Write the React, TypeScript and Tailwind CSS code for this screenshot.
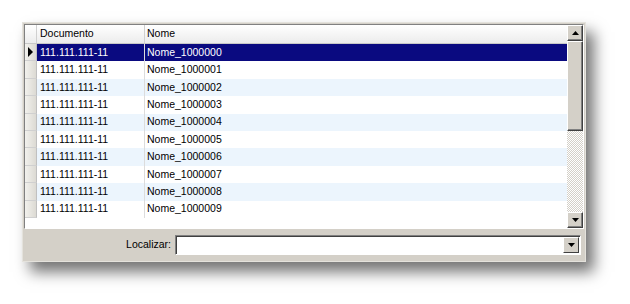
const ROWS = Array.from({ length: 10 }, (_, i) => ({
  doc: "111.111.111-11",
  nome: `Nome_100000${i}`,
}));

function Arrow({ dir }: { dir: "up" | "down" | "right" }) {
  const pts =
    dir === "up" ? "0,4 7,4 3.5,0" : dir === "down" ? "0,0 7,0 3.5,4" : "0,0 5,5 0,10";
  const w = dir === "right" ? 5 : 7;
  const h = dir === "right" ? 10 : 4;
  return (
    <svg width={w} height={h} viewBox={`0 0 ${w} ${h}`}>
      <polygon points={pts} fill="#000" />
    </svg>
  );
}

function Btn({ dir }: { dir: "up" | "down" }) {
  return (
    <div className="flex h-[16px] w-[16px] shrink-0 items-center justify-center border-t border-l border-t-white border-l-white border-r border-b border-r-[#404040] border-b-[#404040] bg-[#d4d0c8] shadow-[inset_-1px_-1px_0_#808080]">
      <Arrow dir={dir} />
    </div>
  );
}

export default function App() {
  return (
    <div className="h-[304px] w-[630px] bg-white pt-[22px] pl-[22px] font-['Liberation_Sans',Arial,sans-serif] text-[10.5px] text-black">
      <div className="flex h-[240px] w-[564px] flex-col border border-[#e4e2dc] bg-[#d4d0c8] p-[1px] shadow-[8px_10px_14px_rgba(0,0,0,0.55)]">
        {/* grid */}
        <div className="flex h-[205px] border-t border-l border-t-[#808080] border-l-[#808080] border-r border-b border-r-white border-b-white">
          <div className="flex flex-1 flex-col bg-white">
            <div className="flex h-[19px] shrink-0 border-b border-[#c8c8c8] bg-gradient-to-b from-white to-[#ececec]">
              <div className="w-[12px] border-r border-[#d0d0d0]" />
              <div className="flex w-[108px] items-center border-r border-[#d0d0d0] pl-[3px]">Documento</div>
              <div className="flex flex-1 items-center pl-[2px]">Nome</div>
            </div>
            {ROWS.map((r, i) => {
              const sel = i === 0;
              return (
                <div key={i} className="flex h-[17.4px] shrink-0">
                  <div className="flex w-[12px] items-center justify-center border-r border-b border-r-[#c0c0c0] border-b-[#d0d0d0] bg-gradient-to-r from-[#f2f1ed] to-[#dcdad3]">
                    {sel && <Arrow dir="right" />}
                  </div>
                  <div
                    className={`flex flex-1 items-center ${
                      sel ? "bg-[#0a0a80] text-white" : i % 2 === 1 ? "bg-white" : "bg-[#ecf5fd]"
                    }`}
                  >
                    <div className="flex h-full w-[108px] items-center border-r border-[#dcdcdc] pl-[3px]">{r.doc}</div>
                    <div className="pl-[2px]">{r.nome}</div>
                  </div>
                </div>
              );
            })}
          </div>
          {/* scrollbar */}
          <div className="flex w-[16px] flex-col bg-[repeating-conic-gradient(#d4d0c8_0%_25%,#ffffff_0%_50%)] bg-[length:2px_2px]">
            <Btn dir="up" />
            <div className="h-[90px] shrink-0 border-t border-l border-t-white border-l-white border-r border-b border-r-[#404040] border-b-[#404040] bg-[#d4d0c8] shadow-[inset_-1px_-1px_0_#808080]" />
            <div className="flex-1" />
            <Btn dir="down" />
          </div>
        </div>
        {/* bottom bar */}
        <div className="flex flex-1 items-center justify-end pr-[3px] pt-[1px]">
          <span className="mr-[4px]">Localizar:</span>
          <div className="flex h-[20px] w-[406px] items-center border-t border-l border-t-[#808080] border-l-[#808080] border-r border-b border-r-white border-b-white bg-white shadow-[inset_1px_1px_0_#404040]">
            <div className="flex-1" />
            <div className="mr-[1px] flex h-[16px] w-[16px] items-center justify-center border-t border-l border-t-white border-l-white border-r border-b border-r-[#404040] border-b-[#404040] bg-[#d4d0c8]">
              <Arrow dir="down" />
            </div>
          </div>
        </div>
      </div>
    </div>
  );
}
